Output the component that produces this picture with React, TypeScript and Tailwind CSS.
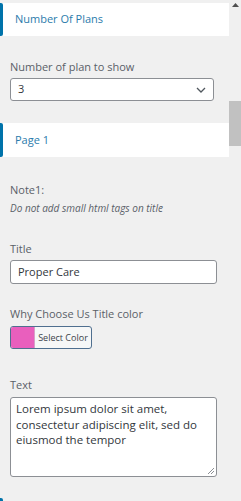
import React from 'react';

const font = { fontFamily: '"Open Sans", "Noto Sans", sans-serif' };

const SectionHeader: React.FC<{ title: string; height: string }> = ({ title, height }) => (
  <div className={`flex shrink-0 items-stretch bg-white ${height}`}>
    <div className="w-[3px] rounded-r-[2px] bg-[#0073aa]" />
    <div className="flex items-center pl-[12px] text-[11px] text-[#2b7bac]">{title}</div>
  </div>
);

const Label: React.FC<{ children: React.ReactNode; className?: string }> = ({ children, className = '' }) => (
  <div className={`text-[11px] leading-[17px] text-[#5a6068] ${className}`}>{children}</div>
);

export default function App() {
  return (
    <div className="flex h-[501px] w-[241px] items-start overflow-hidden bg-[#f0f0f0]" style={font}>
      <div className="w-[229px] shrink-0 pt-[3px]">
        <SectionHeader title="Number Of Plans" height="h-[33px]" />

        <div className="px-[10px]">
          <Label className="mt-[22px]">Number of plan to show</Label>
          <div className="mt-[3px] flex h-[23px] w-[204px] items-center justify-between rounded-[3px] border border-[#8c8f94] bg-white pl-[7px] pr-[7px] text-[11px] text-[#32373c]">
            <span>3</span>
            <svg width="10" height="6" viewBox="0 0 10 6" fill="none">
              <path d="M1 1l4 4 4-4" stroke="#50575e" strokeWidth="1.3" />
            </svg>
          </div>
        </div>

        <div className="mt-[22px]">
          <SectionHeader title="Page 1" height="h-[34px]" />
        </div>

        <div className="px-[10px]">
          <Label className="mt-[24px]">Note1:</Label>
          <div className="mt-[3px] text-[10px] italic leading-[14px] text-[#5a6068]">
            Do not add small html tags on title
          </div>

          <Label className="mt-[25px]">Title</Label>
          <div className="mt-[3px] flex h-[24px] w-[207px] items-center rounded-[3px] border border-[#8c8f94] bg-white pl-[7px] text-[11px] text-[#32373c]">
            Proper Care
          </div>

          <Label className="mt-[21px]">Why Choose Us Title color</Label>
          <div className="mt-[4px] flex h-[23px] w-[82px] overflow-hidden rounded-[3px] border border-[#4f6f8f] bg-[#f6f7f7]">
            <div className="w-[24px] border-r border-[#d7a0c8] bg-[#e95fbd]" />
            <div className="flex flex-1 items-center justify-center text-[9px] text-[#3c434a]">
              Select Color
            </div>
          </div>

          <Label className="mt-[27px]">Text</Label>
          <div className="relative mt-[4px] h-[80px] w-[207px] rounded-[3px] border border-[#8c8f94] bg-white px-[5px] pt-[3px] text-[11.5px] leading-[15.5px] text-[#32373c]">
            Lorem ipsum dolor sit amet, consectetur adipiscing elit, sed do eiusmod the tempor
            <svg className="absolute bottom-[1px] right-[1px]" width="8" height="8" viewBox="0 0 8 8">
              <path d="M7 1L1 7M7 4L4 7" stroke="#8c8f94" strokeWidth="1" />
            </svg>
          </div>
        </div>

        <div className="mt-[21px] h-[20px] w-[3px] rounded-r-[2px] bg-[#0073aa]" />
      </div>

      <div className="flex w-[12px] shrink-0 flex-col items-center">
        <svg className="mt-[3px]" width="7" height="4" viewBox="0 0 7 4">
          <path d="M0 4L3.5 0L7 4Z" fill="#505050" />
        </svg>
        <div className="mt-[94px] h-[45px] w-full bg-[#c1c1c1]" />
      </div>
    </div>
  );
}
